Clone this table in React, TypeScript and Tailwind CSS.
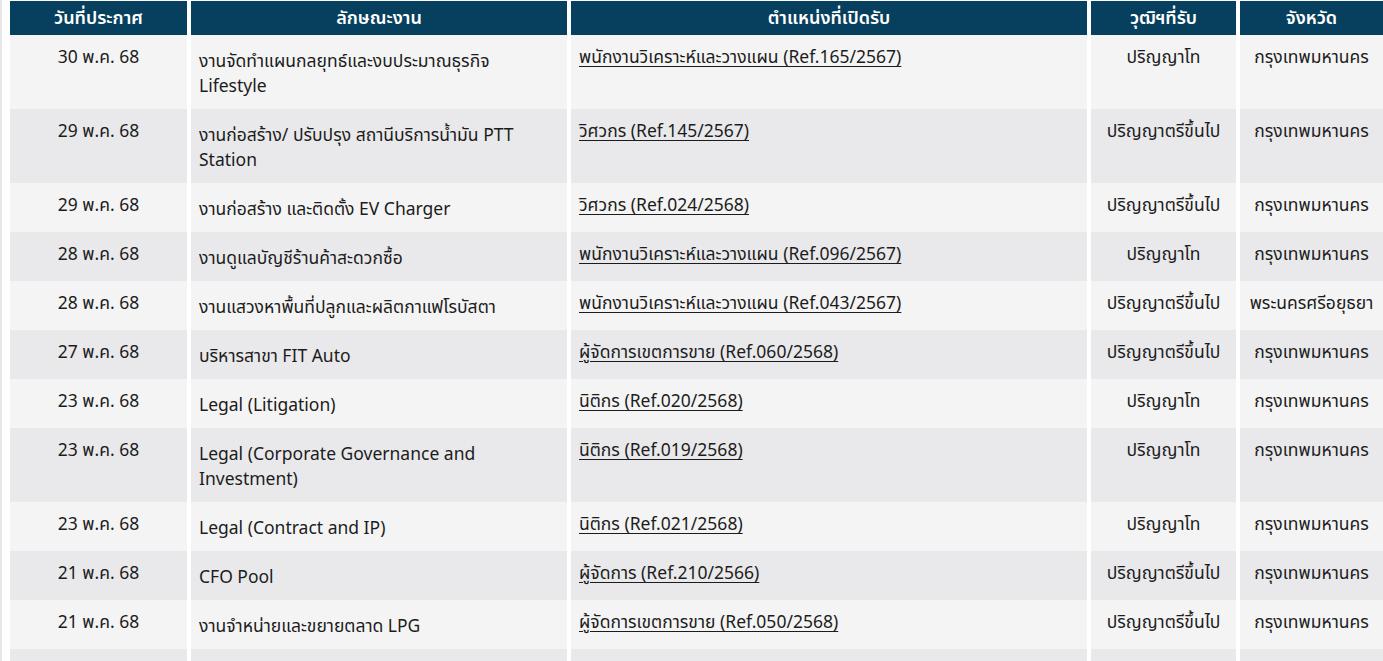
const jobs = [
  ["30 พ.ค. 68", "งานจัดทำแผนกลยุทธ์และงบประมาณธุรกิจ Lifestyle", "พนักงานวิเคราะห์และวางแผน (Ref.165/2567)", "ปริญญาโท", "กรุงเทพมหานคร"],
  ["29 พ.ค. 68", "งานก่อสร้าง/ ปรับปรุง สถานีบริการน้ำมัน PTT Station", "วิศวกร (Ref.145/2567)", "ปริญญาตรีขึ้นไป", "กรุงเทพมหานคร"],
  ["29 พ.ค. 68", "งานก่อสร้าง และติดตั้ง EV Charger", "วิศวกร (Ref.024/2568)", "ปริญญาตรีขึ้นไป", "กรุงเทพมหานคร"],
  ["28 พ.ค. 68", "งานดูแลบัญชีร้านค้าสะดวกซื้อ", "พนักงานวิเคราะห์และวางแผน (Ref.096/2567)", "ปริญญาโท", "กรุงเทพมหานคร"],
  ["28 พ.ค. 68", "งานแสวงหาพื้นที่ปลูกและผลิตกาแฟโรบัสตา", "พนักงานวิเคราะห์และวางแผน (Ref.043/2567)", "ปริญญาตรีขึ้นไป", "พระนครศรีอยุธยา"],
  ["27 พ.ค. 68", "บริหารสาขา FIT Auto", "ผู้จัดการเขตการขาย (Ref.060/2568)", "ปริญญาตรีขึ้นไป", "กรุงเทพมหานคร"],
  ["23 พ.ค. 68", "Legal (Litigation)", "นิติกร (Ref.020/2568)", "ปริญญาโท", "กรุงเทพมหานคร"],
  ["23 พ.ค. 68", "Legal (Corporate Governance and Investment)", "นิติกร (Ref.019/2568)", "ปริญญาโท", "กรุงเทพมหานคร"],
  ["23 พ.ค. 68", "Legal (Contract and IP)", "นิติกร (Ref.021/2568)", "ปริญญาโท", "กรุงเทพมหานคร"],
  ["21 พ.ค. 68", "CFO Pool", "ผู้จัดการ (Ref.210/2566)", "ปริญญาตรีขึ้นไป", "กรุงเทพมหานคร"],
  ["21 พ.ค. 68", "งานจำหน่ายและขยายตลาด LPG", "ผู้จัดการเขตการขาย (Ref.050/2568)", "ปริญญาตรีขึ้นไป", "กรุงเทพมหานคร"],
  ["", "", "", "", ""],
];

const headers = ["วันที่ประกาศ", "ลักษณะงาน", "ตำแหน่งที่เปิดรับ", "วุฒิฯที่รับ", "จังหวัด"];

export default function App() {
  return (
    <div
      className="w-[1383px] h-[661px] overflow-hidden bg-white text-[17.5px] leading-[25px] text-[#1c1c1c]"
      style={{ fontFamily: '"Noto Sans Thai", "Noto Sans", "Liberation Sans", sans-serif' }}
    >
      <div className="border-l-2 border-[#e8e8e8] pl-[4px] pt-px h-full">
        <table className="table-fixed border-separate border-spacing-x-[4px] border-spacing-y-0 w-[1381px]">
          <colgroup>
            <col className="w-[177px]" />
            <col className="w-[376px]" />
            <col className="w-[516px]" />
            <col className="w-[145px]" />
            <col className="w-[143px]" />
          </colgroup>
          <thead>
            <tr>
              {headers.map((h) => (
                <th
                  key={h}
                  className="bg-[#073f5e] text-white font-semibold h-[34px] py-0 text-center text-[18px]"
                >
                  {h}
                </th>
              ))}
            </tr>
          </thead>
          <tbody>
            {jobs.map((row, i) => {
              const bg = i % 2 === 0 ? "bg-[#f4f4f4]" : "bg-[#e9e9eb]";
              return (
                <tr key={i}>
                  <td className={`${bg} align-top text-center pt-[10px] pb-[14px]`}>{row[0]}</td>
                  <td className={`${bg} align-top text-left pl-2 pr-[26px] pt-[14px] pb-[10px]`}>{row[1]}</td>
                  <td className={`${bg} align-top text-left px-2 pt-[10px]`}>
                    <a href="#" className="underline underline-offset-[3px] decoration-1">
                      {row[2]}
                    </a>
                  </td>
                  <td className={`${bg} align-top text-center pt-[10px] whitespace-nowrap`}>{row[3]}</td>
                  <td className={`${bg} align-top text-center pt-[10px] whitespace-nowrap`}>{row[4]}</td>
                </tr>
              );
            })}
          </tbody>
        </table>
      </div>
    </div>
  );
}
